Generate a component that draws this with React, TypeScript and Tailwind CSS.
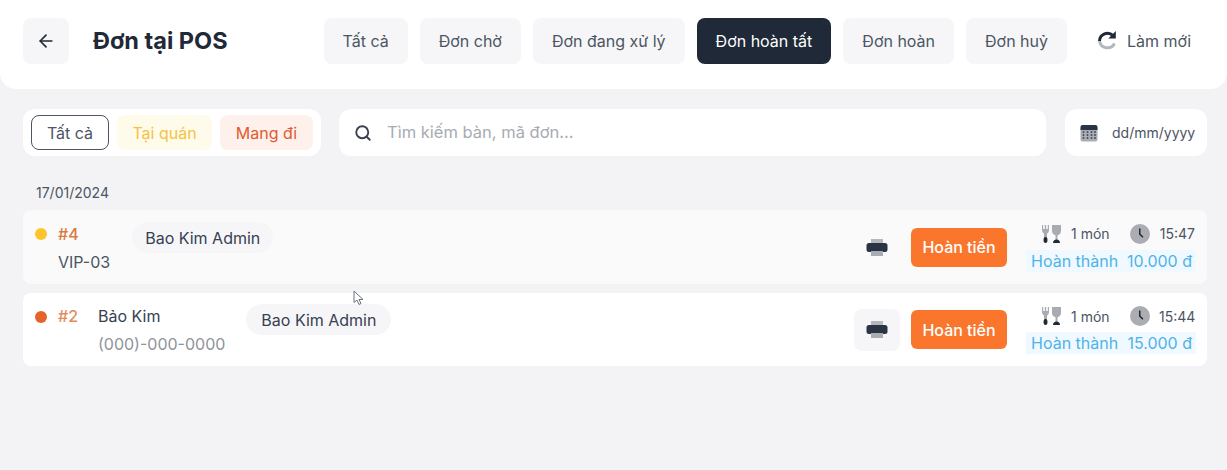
import { ArrowLeft, Search } from "lucide-react";

const tabs = ["Tất cả", "Đơn chờ", "Đơn đang xử lý", "Đơn hoàn tất", "Đơn hoàn", "Đơn huỷ"];

function PrinterIcon() {
  return (
    <svg width="22" height="19" viewBox="0 0 22 19">
      <path d="M5 1h12v5H5z" fill="#b5b7bc" />
      <rect x="0.500" y="5" width="21" height="9" rx="2.500" fill="#2b3442" />
      <path d="M5 13h12v5H5z" fill="#a9acb2" />
    </svg>
  );
}

function GlassIcon() {
  return (
    <svg width="21" height="20" viewBox="0 0 21 20">
      <path d="M1 1v5c0 2 1 3 2 3.500V15h3V9.500C7 9 8 8 8 6V1H6.800v4H5.200V1H3.800v4H2.200V1z" fill="#a8abb1" />
      <ellipse cx="4.500" cy="16" rx="2" ry="3" fill="#1f2937" />
      <path d="M11 1h9v6c0 2.500-2 4-3.500 4.200V16h-2V11.200C13 11 11 9.500 11 7z" fill="#a8abb1" />
      <path d="M12 19c0-2 1.500-3.500 3.500-3.500S19 17 19 19z" fill="#1f2937" />
    </svg>
  );
}

function ClockIcon() {
  return (
    <svg width="20" height="20" viewBox="0 0 20 20">
      <circle cx="10" cy="10" r="10" fill="#abadb3" />
      <path d="M9 4.500h1.500v5.200l3 3-1 1L9 10.500z" fill="#1f2937" />
    </svg>
  );
}

function RefreshIcon() {
  return (
    <svg width="22" height="22" viewBox="0 0 22 22" fill="none">
      <path d="M18.500 13.500A8 8 0 0 1 3.500 11" stroke="#b4b7bc" strokeWidth="3" />
      <path d="M3.500 11A8 8 0 0 1 17 5.500" stroke="#1f2937" strokeWidth="3" />
      <path d="M19.800 1v7.500h-7.500z" fill="#1f2937" />
    </svg>
  );
}

function CalendarIcon() {
  return (
    <svg width="18" height="18" viewBox="0 0 18 18">
      <rect x="0.500" y="3" width="17" height="14.500" rx="2" fill="#a9adb4" />
      <path d="M0.500 6V3a2 2 0 0 1 2-2h13a2 2 0 0 1 2 2v3z" fill="#2b3442" />
      {[8, 11, 14].map((y) =>
        [3.5, 7.5, 11.5, 15].map((x) => <rect key={`${x}-${y}`} x={x - 0.8} y={y - 0.8} width="1.600" height="1.600" fill="#374151" />),
      )}
    </svg>
  );
}

function Stats({ time, amount }: { time: string; amount: string }) {
  return (
    <div className="w-[170px] flex flex-col items-end">
      <div className="flex items-center h-[22px] pr-px text-[14px] text-[#4b5563] whitespace-nowrap">
        <GlassIcon />
        <span className="ml-[9px] w-[38px]">1 món</span>
        <span className="ml-[21px]"><ClockIcon /></span>
        <span className="ml-[9px] w-[36px] text-right">{time}</span>
      </div>
      <div className="mt-[5px] w-[170px] h-[22px] flex items-center justify-between bg-[#f0f9ff] pl-[5px] pr-[4px] text-[16px] leading-none text-[#4fb3e8] whitespace-nowrap">
        <span>Hoàn thành</span>
        <span>{amount}</span>
      </div>
    </div>
  );
}

function RefundRow({ time, amount, dim }: { time: string; amount: string; dim?: boolean }) {
  return (
    <div className="flex items-center">
      <div className={`w-[46px] h-[42px] rounded-lg flex items-center justify-center ${dim ? "bg-[#fafafb]" : "bg-[#f6f6f8]"}`}>
        <PrinterIcon />
      </div>
      <button className="ml-[11px] w-[96px] h-[39px] rounded-md bg-[#fb762d] text-white text-[16px] font-medium">Hoàn tiền</button>
      <div className="ml-[19px] mr-[11px]">
        <Stats time={time} amount={amount} />
      </div>
    </div>
  );
}

export default function App() {
  return (
    <div className="w-[1227px] h-[470px] overflow-hidden bg-[#f3f3f6] text-[#374151] font-['Inter',sans-serif]">
      <header className="h-[89px] bg-white rounded-b-2xl flex items-center pl-[23px] pr-[36px] pb-[8px]">
        <button className="w-[46px] h-[46px] rounded-lg bg-[#f6f6f8] flex items-center justify-center text-[#1f2937]">
          <ArrowLeft size={20} />
        </button>
        <h1 className="ml-[24px] text-[23.500px] font-bold text-[#1f2937] whitespace-nowrap">Đơn tại POS</h1>
        <nav className="ml-auto flex items-center gap-[12px]">
          {tabs.map((tab) => (
            <button
              key={tab}
              className={`h-[46px] px-[19px] rounded-lg text-[16px] whitespace-nowrap ${
                tab === "Đơn hoàn tất" ? "bg-[#1f2937] text-white" : "bg-[#f6f6f8] text-[#4b5563]"
              }`}
            >
              {tab}
            </button>
          ))}
          <div className="ml-[17px] flex items-center gap-[9px] text-[16px] text-[#4b5563] whitespace-nowrap">
            <RefreshIcon />
            Làm mới
          </div>
        </nav>
      </header>

      <main className="px-[23px] pt-[20px] pr-[20px]">
        <div className="flex items-center">
          <div className="h-[47px] w-[298px] bg-white rounded-xl flex items-center gap-[8px] pl-[8px] text-[16px]">
            <span className="w-[78px] h-[35px] rounded-lg border border-[#4b5563] flex items-center justify-center text-[#4b5563]">Tất cả</span>
            <span className="w-[95px] h-[35px] rounded-lg bg-[#fffbeb] flex items-center justify-center text-[#f5c242]">Tại quán</span>
            <span className="w-[93px] h-[35px] rounded-lg bg-[#fef0ea] flex items-center justify-center text-[#df5b32]">Mang đi</span>
          </div>
          <div className="ml-[18px] h-[47px] w-[707px] bg-white rounded-xl flex items-center pl-[15px] text-[16.500px] text-[#a8abb1]">
            <Search size={18} strokeWidth={2.5} className="text-[#374151]" />
            <span className="ml-[15px]">Tìm kiếm bàn, mã đơn...</span>
          </div>
          <div className="ml-[19px] h-[47px] w-[142px] bg-white rounded-xl flex items-center pl-[15px] text-[14px] text-[#4b5563] whitespace-nowrap">
            <CalendarIcon />
            <span className="ml-[14px]">dd/mm/yyyy</span>
          </div>
        </div>

        <div className="mt-[29px] pl-[13px] text-[14px] leading-4 text-[#4b5563]">17/01/2024</div>

        <div className="mt-[9px] h-[74px] bg-[#fafafb] rounded-lg flex justify-between pl-[12px]">
          <div className="flex">
            <div className="w-[23px] pt-[18px]"><span className="block w-[12px] h-[12px] rounded-full bg-[#fdc42d]" /></div>
            <div className="pt-[13px]">
              <div className="h-[22px] leading-[22px] text-[16px] font-medium text-[#d97a3f]">#4</div>
              <div className="mt-[6px] leading-[22px] text-[16px] text-[#4b5563]">VIP-03</div>
            </div>
            <div className="ml-[22px] mt-[12px] h-[31px] px-[13px] rounded-full bg-[#f6f6f8] flex items-center text-[16px] text-[#374151] whitespace-nowrap">Bao Kim Admin</div>
          </div>
          <RefundRow time="15:47" amount="10.000 đ" dim />
        </div>

        <div className="mt-[9px] h-[73px] bg-white rounded-lg flex justify-between pl-[12px]">
          <div className="flex">
            <div className="w-[23px] pt-[18px]"><span className="block w-[12px] h-[12px] rounded-full bg-[#e5622a]" /></div>
            <div className="pt-[12px] w-[40px]">
              <div className="h-[22px] leading-[22px] text-[16px] font-medium text-[#e58a5a]">#2</div>
            </div>
            <div className="pt-[12px]">
              <div className="h-[22px] leading-[22px] text-[16px] text-[#374151]">Bảo Kim</div>
              <div className="mt-[6px] leading-[22px] text-[16px] text-[#8f939a]">(000)-000-0000</div>
            </div>
            <div className="ml-[21px] mt-[11px] h-[31px] px-[15px] rounded-full bg-[#f6f6f8] flex items-center text-[16px] text-[#374151] whitespace-nowrap">Bao Kim Admin</div>
          </div>
          <RefundRow time="15:44" amount="15.000 đ" />
        </div>
      </main>

      {/* con trỏ chuột trong ảnh chụp */}
      <svg className="absolute left-[353px] top-[290px]" width="12" height="16" viewBox="0 0 12 16">
        <path d="M1 1v11.500l3-2.500 2 4.500 2-1-2-4h4z" fill="#fff" stroke="#6b7280" strokeWidth="1" />
      </svg>
    </div>
  );
}
